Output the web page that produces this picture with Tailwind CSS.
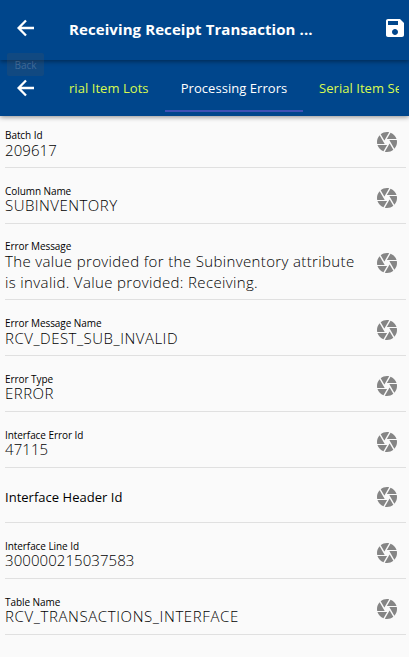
<!DOCTYPE html>
<html lang="en">
<head>
<meta charset="utf-8">
<title>Receiving Receipt Transaction</title>
<script src="https://cdn.jsdelivr.net/npm/@tailwindcss/browser@4"></script>
</head>
<body class="h-[657px] w-[409px] overflow-hidden bg-[#fafafa] font-['Open_Sans','Noto_Sans',sans-serif] text-black">
<svg class="hidden">
  <symbol id="camera" viewBox="0 0 24 24"><path d="M9.4 10.5l4.77-8.26C13.47 2.09 12.75 2 12 2c-2.4 0-4.6.85-6.32 2.25l3.66 6.35.06-.1zM21.54 9c-.92-2.92-3.15-5.26-6-6.34L11.88 9h9.66zm.26 1h-7.49l.29.5 4.76 8.25C20.99 16.97 22 14.61 22 12c0-.69-.07-1.35-.2-2zM8.54 12l-3.9-6.75C3.01 7.03 2 9.39 2 12c0 .69.07 1.35.2 2h7.49l-1.15-2zm-6.08 3c.92 2.92 3.15 5.26 6 6.34L12.12 15H2.46zm11.27 0l-3.9 6.76c.7.15 1.42.24 2.17.24 2.4 0 4.6-.85 6.32-2.25l-3.66-6.35-.93 1.6z"/></symbol>
  <symbol id="back" viewBox="0 0 24 24"><path d="M20 12H5M12 4.5L4.6 12L12 19.5" fill="none" stroke="currentColor" stroke-width="2.3"/></symbol>
</svg>
<header class="relative z-10 bg-[#00468c] text-white shadow-[0_1px_5px_rgba(0,0,0,0.45)]">
  <div class="relative flex h-[60px] items-center pb-1 pl-[14px] pr-[2px] shadow-[0_2px_4px_rgba(0,0,0,0.35)]">
    <svg class="size-6"><use href="#back"/></svg>
    <h1 class="ml-[31px] mt-[2px] flex-1 whitespace-nowrap text-[15px] font-bold leading-5 tracking-[0.09px]">Receiving Receipt Transaction ...</h1>
    <svg class="size-6" viewBox="0 0 24 24" fill="currentColor"><path d="M17 3H5c-1.11 0-2 .9-2 2v14c0 1.1.89 2 2 2h14c1.1 0 2-.9 2-2V7l-4-4zm-5 16c-1.66 0-3-1.34-3-3s1.34-3 3-3 3 1.34 3 3-1.34 3-3 3zm3-10H5V5h10v4z"/></svg>
    <span class="absolute left-[7px] top-[53px] h-[23px] w-[37px] rounded-[2px] bg-[#555]/20 text-center text-[10px] leading-[25px] text-white/20">Back</span>
  </div>
  <nav class="flex h-14 pl-[14px] text-[13px]">
    <svg class="mt-4 size-6"><use href="#back"/></svg>
    <div class="ml-[31px] flex w-[330px] overflow-hidden whitespace-nowrap leading-[57px] tracking-[0.05px] text-[#d9fa50]">
      <span class="w-24 shrink-0">rial Item Lots</span>
      <span class="h-[52px] w-[138px] shrink-0 border-b-2 border-[#3f51b5] text-center text-white">Processing Errors</span>
      <span class="shrink-0 pl-4">Serial Item Serials</span>
    </div>
  </nav>
</header>
<main class="pl-[5px] pr-[3px] text-[15px] font-light leading-[21px]">
  <section class="flex h-[52px] border-b border-[#e0e0e0] pt-3">
    <div class="flex-1"><p class="h-[12px] text-[10px] font-normal tracking-[-0.07px] leading-[15px]">Batch Id</p><p class="tracking-[0.07px]">209617</p></div><svg class="mr-[7px] mt-[2px] size-6 fill-[#858585]"><use href="#camera"/></svg>
  </section>
  <section class="flex h-14 border-b border-[#e0e0e0] pt-4">
    <div class="flex-1"><p class="h-[11px] text-[10px] font-normal tracking-[-0.07px] leading-[15px]">Column Name</p><p class="tracking-[0.47px]">SUBINVENTORY</p></div><svg class="mr-[7px] mt-[2px] size-6 fill-[#858585]"><use href="#camera"/></svg>
  </section>
  <section class="flex h-[76px] border-b border-[#e0e0e0] pt-[15px]">
    <div class="flex-1 whitespace-nowrap"><p class="h-[12px] text-[10px] font-normal tracking-[-0.07px] leading-[15px]">Error Message</p><p class="tracking-[0.36px]">The value provided for the Subinventory attribute<br>is invalid. Value provided: Receiving.</p></div><svg class="mr-[7px] mt-3 size-6 fill-[#858585]"><use href="#camera"/></svg>
  </section>
  <section class="flex h-14 border-b border-[#e0e0e0] pt-4">
    <div class="flex-1"><p class="h-[12px] text-[10px] font-normal tracking-[-0.07px] leading-[15px]">Error Message Name</p><p class="tracking-[0.5px]">RCV_DEST_SUB_INVALID</p></div><svg class="mr-[7px] mt-[2px] size-6 fill-[#858585]"><use href="#camera"/></svg>
  </section>
  <section class="flex h-14 border-b border-[#e0e0e0] pt-4">
    <div class="flex-1"><p class="h-[11px] text-[10px] font-normal tracking-[-0.07px] leading-[15px]">Error Type</p><p class="tracking-[0.5px]">ERROR</p></div><svg class="mr-[7px] mt-[2px] size-6 fill-[#858585]"><use href="#camera"/></svg>
  </section>
  <section class="flex h-14 border-b border-[#e0e0e0] pt-4">
    <div class="flex-1"><p class="h-[11px] text-[10px] font-normal tracking-[-0.07px] leading-[15px]">Interface Error Id</p><p class="tracking-[0.07px]">47115</p></div><svg class="mr-[7px] mt-[2px] size-6 fill-[#858585]"><use href="#camera"/></svg>
  </section>
  <section class="flex h-[55px] border-b border-[#e0e0e0] pt-[17px]">
    <p class="mt-[2px] flex-1 text-[13px] font-normal tracking-[0.02px]">Interface Header Id</p><svg class="mr-[7px] size-6 fill-[#858585]"><use href="#camera"/></svg>
  </section>
  <section class="flex h-14 border-b border-[#e0e0e0] pt-4">
    <div class="flex-1"><p class="h-[11px] text-[10px] font-normal tracking-[-0.07px] leading-[15px]">Interface Line Id</p><p class="tracking-[0.07px]">300000215037583</p></div><svg class="mr-[7px] mt-[2px] size-6 fill-[#858585]"><use href="#camera"/></svg>
  </section>
  <section class="flex h-14 border-b border-[#e0e0e0] pt-4">
    <div class="flex-1"><p class="h-[11px] text-[10px] font-normal tracking-[-0.07px] leading-[15px]">Table Name</p><p class="tracking-[0.6px]">RCV_TRANSACTIONS_INTERFACE</p></div><svg class="mr-[7px] mt-[2px] size-6 fill-[#858585]"><use href="#camera"/></svg>
  </section>
</main>
</body>
</html>
